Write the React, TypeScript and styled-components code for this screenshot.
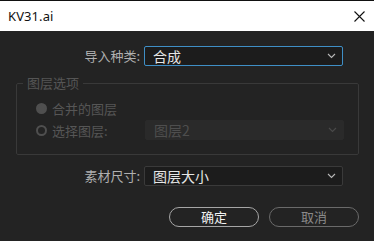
import React, { useState } from 'react';
import styled, { createGlobalStyle } from 'styled-components';

const GlobalStyle = createGlobalStyle`
  html, body {
    margin: 0;
    padding: 0;
    background: #232323;
  }
  body {
    font-family: "Noto Sans CJK SC", "Noto Sans", sans-serif;
  }
`;

const Chevron = ({ color = '#b8b8b8' }: { color?: string }) => (
  <svg width="9" height="6" viewBox="0 0 9 6">
    <path d="M1 1 L4.5 4.5 L8 1" fill="none" stroke={color} strokeWidth="1.1" />
  </svg>
);

const App = () => {
  const [layerMode, setLayerMode] = useState('merged');

  return (
    <Window>
      <GlobalStyle />
      <TitleBar>
        <Title>KV31.ai</Title>
        <CloseButton aria-label="close">
          <svg width="11" height="11" viewBox="0 0 11 11">
            <path d="M0.5 0.5 L10.5 10.5 M10.5 0.5 L0.5 10.5" stroke="#111" strokeWidth="1.1" />
          </svg>
        </CloseButton>
      </TitleBar>

      <Body>
        <FieldRow>
          <Label>导入种类:</Label>
          <Combo $focused>
            <span>合成</span>
            <Chevron />
          </Combo>
        </FieldRow>

        <Group disabled>
          <Legend>图层选项</Legend>
          <RadioRow>
            <RadioOption>
              <Radio $checked={layerMode === 'merged'} onClick={() => setLayerMode('merged')} />
              合并的图层
            </RadioOption>
          </RadioRow>
          <RadioRow>
            <RadioOption>
              <Radio $checked={layerMode === 'choose'} onClick={() => setLayerMode('choose')} />
              选择图层:
            </RadioOption>
            <Combo $disabled>
              <span>图层2</span>
              <Chevron color="#4a4a4a" />
            </Combo>
          </RadioRow>
        </Group>

        <FieldRow className="size">
          <Label>素材尺寸:</Label>
          <Combo>
            <span>图层大小</span>
            <Chevron />
          </Combo>
        </FieldRow>

        <Buttons>
          <PillButton $primary>确定</PillButton>
          <PillButton>取消</PillButton>
        </Buttons>
      </Body>
    </Window>
  );
};

export default App;

const Window = styled.div`
  width: 374px;
  height: 241px;
  background: #232323;
  border-top: 1px solid #111;
  box-sizing: border-box;
  overflow: hidden;
`;

const TitleBar = styled.div`
  height: 30px;
  background: #ffffff;
  display: flex;
  align-items: center;
  justify-content: space-between;
  padding: 0 9px 0 8px;
`;

const Title = styled.span`
  font-family: "Noto Sans", "Liberation Sans", sans-serif;
  font-size: 13px;
  color: #111;
  letter-spacing: 0.1px;
`;

const CloseButton = styled.div`
  display: flex;
  width: 11px;
  height: 11px;
`;

const Body = styled.div`
  padding: 15px 15px 0 0;
`;

const FieldRow = styled.div`
  display: flex;
  align-items: center;
  gap: 4px;

  &.size {
    margin-top: 11px;
  }
`;

const Label = styled.span`
  width: 140px;
  text-align: right;
  font-size: 13px;
  line-height: 20px;
  color: #b0b0b0;
`;

const Combo = styled.div<{ $focused?: boolean; $disabled?: boolean }>`
  width: 199px;
  height: 20px;
  box-sizing: border-box;
  display: flex;
  align-items: center;
  justify-content: space-between;
  padding: 0 6px 0 8px;
  border-radius: 2px;
  border: 1px solid ${(p) => (p.$focused ? '#3f8fc6' : p.$disabled ? '#2a2a2a' : '#3a3a3a')};
  background: ${(p) => (p.$disabled ? '#2a2a2a' : '#1c1c1c')};
  font-size: 14px;
  color: ${(p) => (p.$disabled ? '#4e4e4e' : '#e6e6e6')};

  span {
    line-height: 18px;
  }
`;

const Group = styled.fieldset`
  margin: 9px 0 0 16px;
  width: 343px;
  box-sizing: border-box;
  padding: 7px 0 14px 0;
  border: 1px solid #393939;
  border-radius: 2px;
`;

const Legend = styled.legend`
  margin-left: 6px;
  padding: 0 4px;
  font-size: 13px;
  line-height: 16px;
  color: #555555;
`;

const RadioRow = styled.div`
  display: flex;
  align-items: center;
  height: 20px;

  & + & {
    margin-top: 2px;
  }
`;

const RadioOption = styled.label`
  width: 128px;
  display: flex;
  align-items: center;
  gap: 5px;
  padding-left: 19px;
  box-sizing: border-box;
  font-size: 13px;
  color: #565656;
`;

const Radio = styled.span<{ $checked?: boolean }>`
  width: 11px;
  height: 11px;
  border-radius: 50%;
  box-sizing: border-box;
  border: 2px solid #4f4f4f;
  background: ${(p) => (p.$checked ? '#4f4f4f' : 'transparent')};
`;

const Buttons = styled.div`
  display: flex;
  justify-content: flex-end;
  gap: 10px;
  margin-top: 21px;
`;

const PillButton = styled.button<{ $primary?: boolean }>`
  width: 90px;
  height: 20px;
  padding: 0;
  border-radius: 10px;
  background: transparent;
  border: 1.5px solid ${(p) => (p.$primary ? '#a6a6a6' : '#6a6a6a')};
  font-family: "Noto Sans CJK SC", sans-serif;
  font-size: 13px;
  line-height: 16px;
  color: ${(p) => (p.$primary ? '#f2f2f2' : '#8a8a8a')};
`;
